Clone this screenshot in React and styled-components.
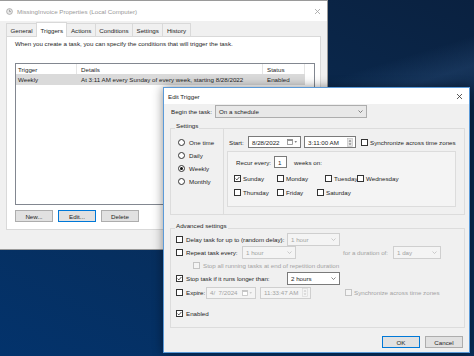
import React from 'react';
import styled, { createGlobalStyle } from 'styled-components';

const GlobalStyle = createGlobalStyle`
  html, body {
    margin: 0;
    padding: 0;
  }
  body {
    font-family: "Segoe UI", "Liberation Sans", Arial, sans-serif;
    font-size: 6.2px;
    color: #1e1e1e;
  }
  * {
    box-sizing: border-box;
  }
`;

const Desktop = styled.div`
  position: relative;
  width: 474px;
  height: 356px;
  overflow: hidden;
  background:
    linear-gradient(163deg, transparent 0 36%, rgba(90, 140, 200, 0.16) 42%, transparent 50%),
    linear-gradient(205deg, #0a2140 0%, #0a2a50 40%, #03336c 100%);
`;

/* ---------- background properties window ---------- */

const PropWindow = styled.div`
  position: absolute;
  left: 0;
  top: 0;
  width: 328px;
  height: 250px;
  background: #f0f0f0;
  border: 1px solid #9a9a9a;
  border-left: none;
  display: flex;
  flex-direction: column;
`;

const TitleBar = styled.div`
  height: ${p => p.$h}px;
  flex: 0 0 auto;
  background: #fff;
  display: flex;
  align-items: center;
  padding: 0 6px 0 ${p => p.$pl}px;
  gap: 4px;
  color: ${p => (p.$inactive ? '#999' : '#1e1e1e')};
`;

const TitleText = styled.span`
  flex: 1;
`;

const TabStrip = styled.div`
  display: flex;
  align-items: flex-end;
  height: 15px;
  padding-left: 6px;
`;

const Tab = styled.div`
  height: ${p => (p.$active ? 15 : 13)}px;
  padding: 0 3.5px;
  display: flex;
  align-items: center;
  border: 1px solid #d9d9d9;
  border-bottom: none;
  margin-right: -1px;
  background: ${p => (p.$active ? '#fff' : '#f0f0f0')};
  position: relative;
  z-index: ${p => (p.$active ? 2 : 1)};
  margin-bottom: ${p => (p.$active ? -1 : 0)}px;
`;

const TabPage = styled.div`
  margin: 0 6px;
  height: 194px;
  background: #fff;
  border: 1px solid #d9d9d9;
  padding: 3px 0 0 8px;
  display: flex;
  flex-direction: column;
`;

const Intro = styled.div`
  height: 8px;
  line-height: 8px;
`;

const ListBox = styled.div`
  margin-top: 15px;
  width: 300px;
  height: 142px;
  border: 1px solid #828790;
  background: #fff;
`;

const ListRow = styled.div`
  display: flex;
  height: ${p => p.$h}px;
  width: 289px;
  background: ${p => (p.$selected ? '#dadada' : 'transparent')};
`;

const Cell = styled.div`
  width: ${p => p.$w}px;
  padding-left: ${p => p.$pl ?? 2}px;
  display: flex;
  align-items: center;
  white-space: nowrap;
  border-right: ${p => (p.$header ? '1px solid #e5e5e5' : 'none')};
`;

const ButtonRow = styled.div`
  display: flex;
  gap: 5px;
  margin-top: 5px;
  justify-content: ${p => p.$justify || 'flex-start'};
  padding-right: ${p => p.$pr || 0}px;
`;

const Button = styled.div`
  width: 38px;
  height: 12px;
  display: flex;
  align-items: center;
  justify-content: center;
  background: #e1e1e1;
  border: 1px solid ${p => (p.$focused ? '#0078d7' : '#adadad')};
`;

/* ---------- edit trigger dialog ---------- */

const Dialog = styled.div`
  position: absolute;
  left: 163px;
  top: 87px;
  width: 307px;
  height: 266px;
  background: #f0f0f0;
  border: 1px solid #5b9ad8;
  box-shadow: 0 0 10px rgba(0, 0, 0, 0.45);
  display: flex;
  flex-direction: column;
`;

const DialogBody = styled.div`
  padding: 0 4px 0 6px;
  display: flex;
  flex-direction: column;
`;

const Row = styled.div`
  display: flex;
  align-items: center;
  height: ${p => p.$h || 13}px;
  margin-top: ${p => p.$mt || 0}px;
  padding-left: ${p => p.$pl || 0}px;
  color: ${p => (p.$disabled ? '#a3a3a3' : 'inherit')};
  white-space: nowrap;
`;

const Label = styled.span`
  width: ${p => p.$w}px;
  flex: 0 0 auto;
  padding-left: ${p => p.$pl || 0}px;
  white-space: nowrap;
`;

const Spacer = styled.span`
  width: ${p => p.$w}px;
  flex: 0 0 auto;
`;

const Combo = styled.div`
  width: ${p => p.$w}px;
  height: 13px;
  flex: 0 0 auto;
  display: flex;
  align-items: center;
  justify-content: space-between;
  padding: 0 3px;
  background: ${p => (p.$variant === 'white' ? '#fff' : p.$variant === 'disabled' ? '#f4f4f4' : '#e8e8e8')};
  border: 1px solid ${p => (p.$variant === 'white' ? '#7a7a7a' : p.$variant === 'disabled' ? '#cfcfcf' : '#adadad')};
  color: ${p => (p.$variant === 'disabled' ? '#a3a3a3' : '#1e1e1e')};
`;

const TextBox = styled.div`
  width: ${p => p.$w}px;
  height: 12px;
  flex: 0 0 auto;
  display: flex;
  align-items: center;
  justify-content: space-between;
  padding: 0 2px 0 3px;
  background: ${p => (p.$disabled ? '#f4f4f4' : '#fff')};
  border: 1px solid ${p => (p.$disabled ? '#cfcfcf' : '#7a7a7a')};
  color: ${p => (p.$disabled ? '#a3a3a3' : '#1e1e1e')};
`;

const Group = styled.div`
  position: relative;
  margin-top: ${p => p.$mt}px;
  height: ${p => p.$h}px;
  border: 1px solid #dcdcdc;
  display: flex;
  flex-direction: ${p => p.$dir || 'column'};
`;

const GroupTitle = styled.span`
  position: absolute;
  top: -7px;
  left: 4px;
  line-height: 8px;
  padding: 0 1px;
  background: #f0f0f0;
`;

const RadioCol = styled.div`
  width: 53px;
  border-right: 1px solid #dcdcdc;
  padding: 7px 0 0 7px;
  display: flex;
  flex-direction: column;
`;

const RightPane = styled.div`
  flex: 1;
  padding: 7px 8px 0 3px;
  display: flex;
  flex-direction: column;
`;

const InnerBox = styled.div`
  margin-top: 3px;
  height: 56px;
  border: 1px solid #dcdcdc;
  background: #f4f4f4;
  padding: 4px 0 0 6px;
  display: flex;
  flex-direction: column;
`;

const Option = styled.span`
  display: flex;
  align-items: center;
  gap: ${p => p.$gap ?? 3}px;
  width: ${p => (p.$w ? `${p.$w}px` : 'auto')};
  flex: 0 0 auto;
  color: ${p => (p.$disabled ? '#a3a3a3' : 'inherit')};
`;

const Box = styled.span`
  width: 7px;
  height: 7px;
  flex: 0 0 auto;
  border: 1px solid ${p => (p.$disabled ? '#c4c4c4' : '#333')};
  background: ${p => (p.$disabled ? '#f4f4f4' : '#fff')};
  display: flex;
  align-items: center;
  justify-content: center;
`;

const Ring = styled.span`
  width: 7px;
  height: 7px;
  flex: 0 0 auto;
  border-radius: 50%;
  border: 1px solid #333;
  background: #fff;
  display: flex;
  align-items: center;
  justify-content: center;

  &::after {
    content: '';
    width: 3px;
    height: 3px;
    border-radius: 50%;
    background: ${p => (p.$on ? '#111' : 'transparent')};
  }
`;

const Check = ({ on, disabled }) => (
  <Box $disabled={disabled}>
    {on && (
      <svg width="5" height="5" viewBox="0 0 5 5">
        <polyline points="0.6,2.6 1.9,3.9 4.4,1" fill="none" stroke="#222" strokeWidth="0.8" />
      </svg>
    )}
  </Box>
);

const CheckOption = ({ on, disabled, w, children, gap }) => (
  <Option $w={w} $disabled={disabled} $gap={gap}>
    <Check on={on} disabled={disabled} />
    {children}
  </Option>
);

const Chevron = ({ disabled }) => (
  <svg width="5" height="3" viewBox="0 0 5 3">
    <polyline points="0.5,0.5 2.5,2.5 4.5,0.5" fill="none" stroke={disabled ? '#b8b8b8' : '#555'} strokeWidth="0.7" />
  </svg>
);

const DateIcons = ({ disabled }) => {
  const c = disabled ? '#c2c2c2' : '#8a8a8a';
  return (
    <svg width="11" height="6" viewBox="0 0 11 6">
      <rect x="0.5" y="0.5" width="5" height="5" fill="#fff" stroke={c} strokeWidth="0.8" />
      <rect x="0.5" y="0.5" width="5" height="1.4" fill={c} />
      <polygon points="7.5,2.3 10,2.3 8.75,3.8" fill={disabled ? '#c2c2c2' : '#555'} />
    </svg>
  );
};

const Spin = ({ disabled }) => {
  const c = disabled ? '#c2c2c2' : '#666';
  return (
    <svg width="6" height="9" viewBox="0 0 6 9">
      <rect x="0.5" y="0.5" width="5" height="8" fill={disabled ? '#f4f4f4' : '#e6e6e6'} stroke={disabled ? '#d6d6d6' : '#bdbdbd'} strokeWidth="0.6" />
      <polygon points="1.6,3.6 4.4,3.6 3,2" fill={c} />
      <polygon points="1.6,5.4 4.4,5.4 3,7" fill={c} />
    </svg>
  );
};

const CloseX = ({ color }) => (
  <svg width="7" height="7" viewBox="0 0 7 7">
    <path d="M1 1 L6 6 M6 1 L1 6" stroke={color} strokeWidth="0.8" />
  </svg>
);

const TaskIcon = () => (
  <svg width="7" height="7" viewBox="0 0 7 7">
    <circle cx="3.5" cy="3.5" r="2.9" fill="#e8e8e8" stroke="#9a9a9a" strokeWidth="0.7" />
    <path d="M3.5 1.8 V3.6 H5" fill="none" stroke="#8a8a8a" strokeWidth="0.7" />
  </svg>
);

const tabs = ['General', 'Triggers', 'Actions', 'Conditions', 'Settings', 'History'];

const App = () => {
  return (
    <>
      <GlobalStyle />
      <Desktop>
        <PropWindow>
          <TitleBar $h={20} $pl={6} $inactive>
            <TaskIcon />
            <TitleText>MissingInvoice Properties (Local Computer)</TitleText>
            <CloseX color="#a0a0a0" />
          </TitleBar>
          <TabStrip>
            {tabs.map(t => (
              <Tab key={t} $active={t === 'Triggers'}>{t}</Tab>
            ))}
          </TabStrip>
          <TabPage>
            <Intro>When you create a task, you can specify the conditions that will trigger the task.</Intro>
            <ListBox>
              <ListRow $h={10}>
                <Cell $w={61} $header>Trigger</Cell>
                <Cell $w={186} $header $pl={4}>Details</Cell>
                <Cell $w={42} $header $pl={4}>Status</Cell>
              </ListRow>
              <ListRow $h={11} $selected>
                <Cell $w={61}>Weekly</Cell>
                <Cell $w={186} $pl={4}>At 3:11 AM every Sunday of every week, starting 8/28/2022</Cell>
                <Cell $w={42} $pl={4}>Enabled</Cell>
              </ListRow>
            </ListBox>
            <ButtonRow>
              <Button>New...</Button>
              <Button $focused>Edit...</Button>
              <Button>Delete</Button>
            </ButtonRow>
          </TabPage>
        </PropWindow>

        <Dialog>
          <TitleBar $h={16} $pl={4}>
            <TitleText>Edit Trigger</TitleText>
            <CloseX color="#333" />
          </TitleBar>
          <DialogBody>
            <Row $mt={1} $h={13}>
              <Label $w={45} $pl={1}>Begin the task:</Label>
              <Combo $w={152}>
                On a schedule
                <Chevron />
              </Combo>
            </Row>

            <Group $mt={10} $h={87} $dir="row">
              <GroupTitle>Settings</GroupTitle>
              <RadioCol>
                {['One time', 'Daily', 'Weekly', 'Monthly'].map(r => (
                  <Option key={r} as={Row} $gap={4}>
                    <Ring $on={r === 'Weekly'} />
                    {r}
                  </Option>
                ))}
              </RadioCol>
              <RightPane>
                <Row $h={12} $pl={2}>
                  <Label $w={19}>Start:</Label>
                  <TextBox $w={53}>
                    8/28/2022
                    <DateIcons />
                  </TextBox>
                  <Spacer $w={3} />
                  <TextBox $w={52}>
                    3:11:00 AM
                    <Spin />
                  </TextBox>
                  <Spacer $w={5} />
                  <CheckOption gap={2}>Synchronize across time zones</CheckOption>
                </Row>
                <InnerBox>
                  <Row $h={12} $pl={2}>
                    <Label $w={38}>Recur every:</Label>
                    <TextBox $w={13}>1</TextBox>
                    <Spacer $w={7} />
                    weeks on:
                  </Row>
                  <Row $h={14} $mt={3}>
                    <CheckOption on w={43} gap={2}>Sunday</CheckOption>
                    <CheckOption w={48} gap={2}>Monday</CheckOption>
                    <CheckOption w={32} gap={2}>Tuesday</CheckOption>
                    <CheckOption gap={2}>Wednesday</CheckOption>
                  </Row>
                  <Row $h={14}>
                    <CheckOption w={43} gap={2}>Thursday</CheckOption>
                    <CheckOption w={40} gap={2}>Friday</CheckOption>
                    <CheckOption gap={2}>Saturday</CheckOption>
                  </Row>
                </InnerBox>
              </RightPane>
            </Group>

            <Group $mt={13} $h={100}>
              <GroupTitle>Advanced settings</GroupTitle>
              <Row $mt={4} $pl={5}>
                <CheckOption>
                  <Label $w={101}>Delay task for up to (random delay):</Label>
                </CheckOption>
                <Combo $w={53} $variant="disabled">
                  1 hour
                  <Chevron disabled />
                </Combo>
              </Row>
              <Row $pl={5}>
                <CheckOption>
                  <Label $w={56}>Repeat task every:</Label>
                </CheckOption>
                <Combo $w={54} $variant="disabled">
                  1 hour
                  <Chevron disabled />
                </Combo>
                <Spacer $w={47} />
                <Label $w={50} as="span" style={{ color: '#a3a3a3' }}>for a duration of:</Label>
                <Combo $w={48} $variant="disabled">
                  1 day
                  <Chevron disabled />
                </Combo>
              </Row>
              <Row $pl={22}>
                <CheckOption disabled>Stop all running tasks at end of repetition duration</CheckOption>
              </Row>
              <Row $pl={5}>
                <CheckOption on>
                  <Label $w={101}>Stop task if it runs longer than:</Label>
                </CheckOption>
                <Combo $w={53} $variant="white">
                  2 hours
                  <Chevron />
                </Combo>
              </Row>
              <Row $pl={5} $mt={1}>
                <CheckOption>
                  <Label $w={20}>Expire:</Label>
                </CheckOption>
                <TextBox $w={50} $disabled>
                  4/&nbsp;&nbsp;7/2024
                  <DateIcons disabled />
                </TextBox>
                <Spacer $w={4} />
                <TextBox $w={51} $disabled>
                  11:33:47 AM
                  <Spin disabled />
                </TextBox>
                <Spacer $w={34} />
                <CheckOption disabled gap={2}>Synchronize across time zones</CheckOption>
              </Row>
              <Row $pl={5} $mt={8}>
                <CheckOption on>Enabled</CheckOption>
              </Row>
            </Group>

            <ButtonRow $justify="flex-end" $pr={2} style={{ marginTop: 8 }}>
              <Button $focused>OK</Button>
              <Button>Cancel</Button>
            </ButtonRow>
          </DialogBody>
        </Dialog>
      </Desktop>
    </>
  );
};

export default App;
